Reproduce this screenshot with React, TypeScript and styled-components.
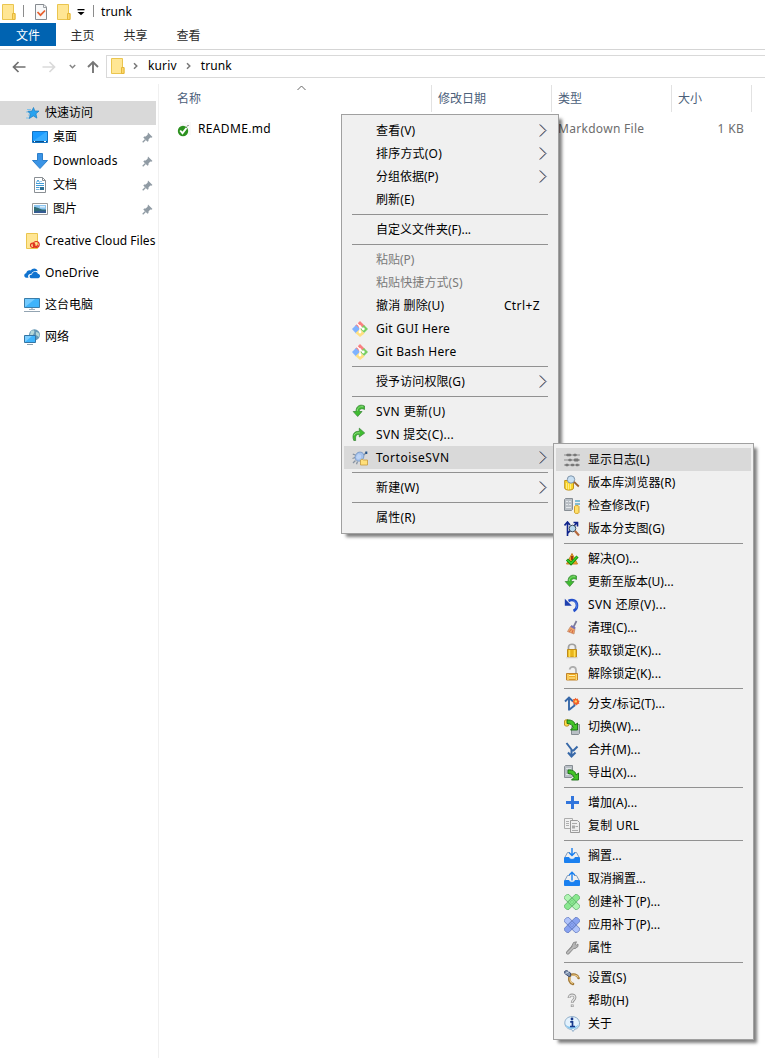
import React from "react";
import styled, { createGlobalStyle } from "styled-components";

const GlobalStyle = createGlobalStyle`
  * { box-sizing: border-box; }
  body {
    margin: 0;
    background: #fff;
    color: #000;
    font: 12px/16px "Noto Sans", "Noto Sans CJK SC", sans-serif;
    overflow: hidden;
  }
  svg { display: block; flex: none; }
`;

const Window = styled.div`
  position: relative;
  display: flex;
  flex-direction: column;
  width: 765px;
  height: 1058px;
  overflow: hidden;
  background: #fff;
`;

const Label = styled.span<{ $spacing?: number }>`
  white-space: pre;
  letter-spacing: ${(p) => p.$spacing ?? 0}px;
`;

/* ---------- title bar, ribbon, address ---------- */

const TitleBar = styled.header`
  display: flex;
  align-items: center;
  height: 23px;
  padding-left: 1px;
`;

const TitleRule = styled.i<{ $before: number; $after: number }>`
  width: 1px;
  height: 12px;
  margin: 0 ${(p) => p.$after}px 2px ${(p) => p.$before}px;
  background: #8c8c8c;
`;

const TitleGap = styled.i<{ $size: number }>`
  width: ${(p) => p.$size}px;
`;

const Ribbon = styled.nav`
  display: flex;
  height: 27px;
  border-bottom: 1px solid #d5d5d5;
`;

const Tab = styled.div<{ $active?: boolean }>`
  width: ${(p) => (p.$active ? 56 : 53)}px;
  height: 23px;
  line-height: 25px;
  text-align: center;
  color: ${(p) => (p.$active ? "#fff" : "#2b2b2b")};
  background: ${(p) => (p.$active ? "#0063b1" : "transparent")};
`;

const AddressRow = styled.div`
  display: flex;
  align-items: center;
  height: 34px;
  padding: 0 0 1px 0;
`;

const AddressBox = styled.div`
  display: flex;
  align-items: center;
  flex: 1;
  height: 23px;
  padding: 0 0 1px 3px;
  border: 1px solid #d9d9d9;
  border-right: 0;
`;

const Crumb = styled(Label)`
  margin: 0 0 1px 10px;
`;

/* ---------- panes ---------- */

const Body = styled.div`
  display: flex;
  flex: 1;
`;

const Sidebar = styled.aside`
  width: 159px;
  padding-top: 17px;
  border-right: 1px solid #f0f0f0;
`;

const SideGroup = styled.section`
  padding-bottom: 4px;
`;

const SideItem = styled.div<{ $indent?: boolean; $root?: boolean; $selected?: boolean }>`
  display: flex;
  align-items: center;
  width: 156px;
  height: ${(p) => (p.$root ? 32 : 24)}px;
  padding-left: ${(p) => (p.$indent ? 32 : 24)}px;
  padding-right: ${(p) => (p.$indent ? 3 : 0)}px;
  background: ${(p) => (p.$selected ? "#d9d9d9" : "transparent")};
  & > span { margin-left: 5px; flex: 1; }
`;

const Files = styled.main`
  display: flex;
  flex-direction: column;
  flex: 1;
`;

const HeadRow = styled.div`
  display: flex;
  height: 28px;
  padding-top: 1px;
`;

const HeadCell = styled.div<{ $width: number; $first?: boolean }>`
  position: relative;
  width: ${(p) => p.$width}px;
  padding-left: ${(p) => (p.$first ? 18 : 6)}px;
  border-right: 1px solid #e2e2e2;
  line-height: 27px;
  color: #4c607a;
`;

const SortMark = styled.span`
  position: absolute;
  left: 138px;
  top: 0;
`;

const FileRow = styled.div`
  display: flex;
  align-items: center;
  height: 23px;
  margin-top: 5px;
  padding-left: 17px;
`;

const FileCell = styled(Label)<{ $width: number; $muted?: boolean; $right?: boolean }>`
  width: ${(p) => p.$width}px;
  color: ${(p) => (p.$muted ? "#6d6d6d" : "#000")};
  text-align: ${(p) => (p.$right ? "right" : "left")};
`;

/* ---------- context menus ---------- */

const MenuBox = styled.div<{ $x: number; $y: number; $width: number }>`
  position: absolute;
  left: ${(p) => p.$x}px;
  top: ${(p) => p.$y}px;
  width: ${(p) => p.$width}px;
  padding: 4px 2px;
  border: 1px solid #a0a0a0;
  background: #f0f0f0;
  box-shadow: 4px 4px 3px -1px rgba(0, 0, 0, 0.5);
`;

const MenuRow = styled.div<{ $hot?: boolean; $disabled?: boolean }>`
  display: flex;
  align-items: center;
  height: 23px;
  padding: 0 8px;
  background: ${(p) => (p.$hot ? "#d9d9d9" : "transparent")};
  color: ${(p) => (p.$disabled ? "#7a7a7a" : "#000")};
`;

const IconSlot = styled.span`
  width: 24px;
  height: 16px;
  flex: none;
`;

const MenuText = styled(Label)`
  flex: 1;
`;

const Shortcut = styled(Label)`
  margin-right: 8px;
`;

const Divider = styled.div`
  height: 7px;
  padding: 3px 8px;
  &::before { content: ""; display: block; height: 1px; background: #919191; }
`;

/* ---------- icons ---------- */

const Svg = ({ w = 16, h = 16, children }: { w?: number; h?: number; children: React.ReactNode }) => (
  <svg width={w} height={h} viewBox={`0 0 ${w} ${h}`} fill="none">{children}</svg>
);

const Folder = () => (
  <Svg>
    <path d="M1.5 .5h11v9h1.5v6H1.5z" fill="#ffe694" stroke="#eac54f" />
    <path d="M11.5 9.5h2.5v6h-2.5z" fill="#fdd96b" stroke="#e5b73b" />
  </Svg>
);
const CheckedDoc = () => (
  <Svg>
    <path d="M2.500.5h8.500l2.500 2.500v12.500h-11z" fill="#f7f8f9" stroke="#868b90" />
    <path d="M10.500.5v3h3" stroke="#9ca0a5" />
    <path d="M4.500 8l3 3.200 4.500-4.700" stroke="#e8602e" strokeWidth="1.700" />
  </Svg>
);
const QuickMenu = () => (
  <Svg w={8} h={8}><path d="M.5 1h7v1.300h-7z" fill="#000" /><path d="M.5 4h7L4 7.300z" fill="#000" /></Svg>
);
const ArrowH = ({ flip, color }: { flip?: boolean; color: string }) => (
  <Svg w={14} h={12}>
    <g transform={flip ? "matrix(-1 0 0 1 14 0)" : undefined} stroke={color} strokeWidth="1.700">
      <path d="M1.500 6h12M6.500 1L1.500 6l5 5" />
    </g>
  </Svg>
);
const ArrowUp = () => <Svg w={12} h={14}><path d="M6 13V2M1 7l5-5 5 5" stroke="#777" strokeWidth="1.900" /></Svg>;
const ChevronDown = () => <Svg w={7} h={5}><path d="M.8 1l2.700 2.700L6.200 1" stroke="#858585" strokeWidth="1.500" /></Svg>;
const ChevronSmall = () => <Svg w={5} h={8}><path d="M1 1.200L3.800 4 1 6.800" stroke="#777" strokeWidth="1.500" /></Svg>;
const SortCaret = () => <Svg w={10} h={6}><path d="M.5 5l4-4 4 4" stroke="#666" /></Svg>;
const SubArrow = () => (
  <Svg w={9} h={13}>
    <path d="M0 .5l6 6-6 6" stroke="#f0bd8c" strokeWidth=".8" />
    <path d="M1.600.5l6 6-6 6" stroke="#7fc0ee" strokeWidth=".8" />
    <path d="M.8.5l6 6-6 6" stroke="#372a48" strokeWidth=".9" />
  </Svg>
);

const Star = () => (
  <Svg>
    <path d="M3 4.500h4M2 7h4M4 10h3M2 13h3" stroke="#7fc1ea" />
    <path d="M9.500 2.500l1.300 3.500 4.200.1-3.100 2.700 1 4.300-3.600-2.200-4 2.600 1.100-4.500-2.500-2.700 4-.2z" fill="#29a3ef" stroke="#2384c6" strokeWidth=".8" />
  </Svg>
);
const Desktop = () => (
  <Svg><path d="M.5 2.500h15v11H.5z" fill="#1a9bff" stroke="#1273c2" /><path d="M1 12L14 3h1v9z" fill="#38adff" /><path d="M1 12.500h14" stroke="#0b4f8c" /><path d="M2 12.500h1M12 12.500h2" stroke="#fff" /></Svg>
);
const Download = () => <Svg><path d="M5.500 .5h5v7h5L8 15.500.5 7.500h5z" fill="#3a94e6" stroke="#2d7fca" /></Svg>;
const Doc = () => (
  <Svg>
    <path d="M2.500.5h8l3 3v12h-11z" fill="#fff" stroke="#8a8f94" />
    <path d="M10.500.5v3h3" stroke="#8a8f94" />
    <path d="M4.500 5.500L6 3l1.500 2.500M8.500 4.500h1M4 6.500h8M4 8.500h8M4 10.500h3.500" stroke="#3f9bd6" />
    <path d="M4 12.500h3.500" stroke="#7bb9df" /><path d="M8 10h4v3H8z" fill="#2d6f94" />
  </Svg>
);
const Picture = () => (
  <Svg>
    <path d="M.5 2.500h15v11H.5z" fill="#fff" stroke="#9a9a9a" />
    <path d="M2 4h12v8H2z" fill="#8dc5ef" /><path d="M2 6c4 0 6 3 12 2.500V12H2z" fill="#316c74" />
    <path d="M2 10.500c5-1 8-1 12-.5v2H2z" fill="#365b92" /><path d="M8 5h5v1.500H8z" fill="#ddeefa" />
  </Svg>
);
const Pin = () => (
  <Svg w={11} h={11}>
    <path d="M6 .5L10.500 5l-1.200.7-1-.1-1.800 1.900v1.500l-1 .8-4.200-4.200.9-1h1.500l1.900-1.800z" fill="#909ba4" />
    <path d="M3.500 7.500L.7 10.300" stroke="#909ba4" strokeWidth="1.300" />
  </Svg>
);
const CreativeCloud = () => (
  <Svg>
    <path d="M2.500.5h11v15h-11z" fill="#ffe694" stroke="#eac54f" />
    <g stroke="#e0341f" strokeWidth="1.200"><circle cx="8.700" cy="12.300" r="2.200" /><circle cx="12.200" cy="11.500" r="3" /><path d="M9 11.500l2 1.800c1 .8 2.500 0 2.400-1.600" /></g>
  </Svg>
);
const OneDrive = () => (
  <Svg>
    <path d="M4.500 12.800H2.300C-.4 12.200-.4 8.700 2.200 8.300 2.500 5.600 5 4.700 6.700 5.500c1.700-3 6.200-2.800 7 .7-4-.8-6 1.200-6.200 2.500-3.200 0-4 2.200-3 4.100z" fill="#0f72cf" />
    <path d="M7 13.200c-2.300-.7-1.700-3.800 1-3.700.4-3.400 4.800-3.700 5.900-.8 2.800.5 2.800 4.200.3 4.500z" fill="#0f72cf" />
  </Svg>
);
const Computer = () => (
  <Svg>
    <path d="M.5 1.500h15v9H.5z" fill="#3fb4fb" stroke="#3b7da9" /><path d="M1 10V2h10z" fill="#74cbff" />
    <path d="M5 12.500h6" stroke="#9fb0bc" /><path d="M0 14.500h16" stroke="#93a4b2" /><path d="M7 11h2v1H7z" fill="#bcc7cf" />
  </Svg>
);
const Network = () => (
  <Svg>
    <circle cx="10.500" cy="5.800" r="5.500" fill="#6799b5" /><path d="M7 2c3-2 4 0 3 2s-1 3-4 2zM12 3c3 0 4 3 3 5l-3-2z" fill="#b5d8d8" />
    <path d="M.5 6.500h11v7H.5z" fill="#3fb4fb" stroke="#3475a4" /><path d="M1 13V7h7z" fill="#7dceff" />
    <path d="M3 15.500h6" stroke="#8ba0ae" />
  </Svg>
);
const FileOk = () => (
  <Svg>
    <path d="M4 1h11v13H4z" fill="#f9f9f9" /><circle cx="7" cy="10" r="5.200" fill="#2c911f" />
    <path d="M4.200 9.500l2.300 2.700 4-5.200" stroke="#fff" strokeWidth="1.900" /><path d="M11 5.500l1.500-1.500" stroke="#555" />
  </Svg>
);
const GitLogo = () => (
  <Svg>
    <path d="M8 0l5 5-5 4-5-4z" fill="#f98080" /><path d="M4 4l4 4-4 4.500L0 8z" fill="#80b3ff" />
    <path d="M12 4l4 4-4 4-4-4z" fill="#79cf62" /><path d="M8 8l4.500 4.500L8 16l-4.500-4z" fill="#ffe080" />
    <path d="M5 2.500l3 3v6M8 5.500L11 8" stroke="#fff" strokeWidth="1.300" />
    <circle cx="8" cy="5.500" r="1.300" fill="#fff" /><circle cx="8" cy="11" r="1.400" fill="#fff" /><circle cx="11.300" cy="8" r="1.400" fill="#fff" />
  </Svg>
);
const UpdateArrow = () => (
  <Svg>
    <path d="M12.500 5.500V2C8-.2 4 2 4 7.500H1.200l4.500 5 4.300-5H7.300C7.200 5 9.500 3.800 12.500 5.500z" fill="#3fbd30" stroke="#3d8a3b" strokeWidth=".8" />
    <path d="M5.300 7c0-3 2-4.800 6-4.200" stroke="#8dd780" />
  </Svg>
);
const CommitArrow = () => (
  <Svg>
    <path d="M1.800 13.500C-.4 8 2 3.800 7.300 4.400V1.200l5.400 4.800-5.400 4V7.500C4 7 3.200 9.500 3.700 13.500z" fill="#3fbd30" stroke="#3d8a3b" strokeWidth=".8" />
    <path d="M2 8.500c.8-2.500 3-3 6-2.600" stroke="#8dd780" />
  </Svg>
);
const Tortoise = () => (
  <Svg>
    <path d="M3.500 10.500L1 13M5.500 11.500l-1 2.800M3.500 5L.8 4.200M3 7.500L.5 8.500M12 5l2-2.500" stroke="#8793a2" strokeWidth="1.300" />
    <path d="M3 8c0-4 3-7 7-5.500 2 1 2.500 4 1 6.500-2 3-7 3-8-1z" fill="#a6c3ed" stroke="#6f90be" strokeWidth=".8" />
    <path d="M6 4l3 1v3L6 9.500 4 7.500z" fill="#bdd4f5" /><path d="M13.300 1.500h2v2.500h-2z" fill="#25548a" />
    <path d="M8.500 10l1.500-1 1.500 1h4v5h-7z" fill="#ffdf7a" stroke="#c69a3b" strokeWidth=".8" />
  </Svg>
);
const LogLines = () => (
  <Svg>
    <path d="M0 3h16M0 8h16M0 13h16" stroke="#8d8d8d" />
    <g fill="#777"><path d="M2 3l1-1.300h3.500L7.500 3l-1 1.300H3zM9 3l1-1.300h2L13 3l-1 1.300h-2zM4 8l1-1.300h2L8 8 7 9.300H5zM9.500 8l1-1.500h3.500L15 8l-1 1.500h-3.500zM1 13l1-1.300h2L5 13l-1 1.300H2zM6.500 13l1-1.300h2l1 1.300-1 1.300h-2zM11.500 13l.8-1.300h2L15 13l-.7 1.300h-2z" /></g>
  </Svg>
);
const RepoBrowse = () => (
  <Svg>
    <path d="M.7 5.500v7.500c0 2.800 8.800 2.800 8.800 0V5.500z" fill="#fbd52b" stroke="#c0941b" /><path d="M2.500 8v6M4.500 8.500v6M6.500 9v5" stroke="#ffed82" />
    <circle cx="7" cy="4.500" r="3.700" fill="#c8dff2" stroke="#7e93a8" /><path d="M10 6.800l4.800 4.700" stroke="#99602f" strokeWidth="1.800" />
  </Svg>
);
const CheckMods = () => (
  <Svg>
    <path d="M.5 1.500l1-1h7v11l-1 1h-7z" fill="#b9bfc5" stroke="#868d93" /><path d="M2 3.500h2M5 3.500h2M2 6.500h2M5 6.500h2M2 9.500h5" stroke="#e3e7ea" />
    <path d="M11 3h5M11 6h5" stroke="#1689b5" strokeWidth="1.200" />
    <path d="M10.500 8.500c0-1.300 4.500-1.300 4.500 0v6c0 1.300-4.500 1.300-4.500 0z" fill="#ffe06a" stroke="#d0a22c" />
  </Svg>
);
const RevGraph = () => (
  <Svg>
    <path d="M3.500 15V1.500M0.500 4.500l3-3.500L6 4M4 12l9-10.500M9.500 1.500h4v4" stroke="#0f248c" strokeWidth="1.600" />
    <circle cx="8.500" cy="7.500" r="3.300" fill="#b8d9ef" stroke="#3d4f5d" /><path d="M11 10l4 4.500" stroke="#b4683c" strokeWidth="2.200" />
  </Svg>
);
const Resolve = () => (
  <Svg>
    <path d="M8 2.500l5.500 10.500h-11z" fill="#f2a31e" stroke="#c7802a" /><path d="M8 5v4" stroke="#8a1d08" strokeWidth="1.600" />
    <path d="M3 8.500l4 4 6.500-7" stroke="#13870e" strokeWidth="3" /><path d="M3.300 9l3.800 3.300 6-6.500" stroke="#35d52b" strokeWidth="1.300" />
  </Svg>
);
const Revert = () => (
  <Svg>
    <path d="M4.500 4C9 1.500 13 4 13 8.500c0 2.500-1.500 4.500-3.500 5.500" stroke="#234fca" strokeWidth="2.600" />
    <path d="M.8 1.800v7h7z" fill="#1f3fae" />
    <path d="M9.500 3.800c3 1 4 4 2.800 7.500" stroke="#5c87e6" strokeWidth=".9" />
  </Svg>
);
const Broom = () => (
  <Svg>
    <path d="M12.500 1L9.500 7" stroke="#7b7b98" strokeWidth="1.700" /><path d="M6.500 6.500l4.500 2-1 5.500-6.500-2.500z" fill="#eca568" stroke="#c08360" strokeWidth=".7" />
    <path d="M7 5.800l4.200 2.500" stroke="#7471b5" strokeWidth="2" /><path d="M5 12l2.500-3M8 13l1-3" stroke="#d66a4c" />
  </Svg>
);
const Lock = () => (
  <Svg>
    <path d="M4.500 8V4C4.500.3 11.500.3 11.500 4v4" stroke="#a0a0a0" strokeWidth="1.700" /><path d="M3.500 6.500h9v7.500h-9z" fill="#e9b51b" stroke="#bd8b1c" />
    <path d="M5.500 7v7M10.500 7v7" stroke="#ffdf56" strokeWidth="1.500" /><path d="M2 14.800h12" stroke="#d0d0d0" strokeWidth=".8" />
  </Svg>
);
const Unlock = () => (
  <Svg>
    <path d="M5.500 3.500C6.500-.2 12-.2 12 4v4" stroke="#adadad" strokeWidth="1.700" /><path d="M2.500 7.500h11v6.500h-11z" fill="#efaa22" stroke="#c1832a" />
    <path d="M4 8v6M12.300 8v6" stroke="#ffe07b" strokeWidth="1.200" /><path d="M5 9.500h6M5 12h6" stroke="#fff1b1" />
  </Svg>
);
const Branch = () => (
  <Svg>
    <path d="M5 14.500V2M1 5.500L5 1.500l4 4M5.500 13.500L10.500 9.500V6" stroke="#3768a8" strokeWidth="1.900" />
    <path d="M11.500 1.800l1 1.300 1.500-.5.200 1.700 1.600.7-1 1.300.6 1.500-1.700.1-.8 1.500-1.300-1.200-1.700.6-.1-1.800-1.500-1.200 1.200-1.100L9 3.100l1.700-.1z" fill="#f25f28" /><circle cx="11.800" cy="5.400" r="1.200" fill="#ffd35e" />
  </Svg>
);
const Curve = ({ x = 0, y = 0 }: { x?: number; y?: number }) => (
  <path transform={`translate(${x} ${y})`} d="M0 0C5-.5 8 2 8 5L10.500 3v7H3.500L6 7.500C5.500 5 3.500 3.500 0 3.500z" fill="#42c427" stroke="#166d12" strokeWidth=".9" />
);
const Switch = () => (
  <Svg>
    <path d="M8.500 5.500h7v9l-1 1h-7v-6z" fill="#b9bfc5" stroke="#868d93" /><path d="M.5 2C.5.200 5 .200 5 2v4C5 7.500.5 7.500.5 6z" fill="#ffdb48" stroke="#b8922c" />
    <Curve x={3} y={1} />
  </Svg>
);
const Merge = () => (
  <Svg><path d="M2.500 1l5 6.500v7M13.500 4.500L9.500 8.500H7.500M4 10.500l3.500 4 4-4" stroke="#3768a8" strokeWidth="2" /></Svg>
);
const Export = () => (
  <Svg><path d="M.5 1.500l1-1h7v11l-1 1h-7z" fill="#b9bfc5" stroke="#868d93" /><path d="M2 3.500h5M2 9.500h3" stroke="#dfe3e6" /><Curve x={4} y={5} /></Svg>
);
const Add = () => <Svg><path d="M8.500 1v13M2 7.500h13" stroke="#3175dc" strokeWidth="3" /></Svg>;
const CopyUrl = () => (
  <Svg>
    <path d="M.5 .5h8v10h-8z" fill="#f1f1f1" stroke="#acacac" /><path d="M2 3.500h3M2 5.500h3M2 7.500h3" stroke="#b0b0b0" />
    <path d="M6.500 2.500h7l2 2v10h-9z" fill="#eee" stroke="#999" /><path d="M8 5.500h5M11.500 8.500h2.500M8 12.500h6" stroke="#aaa" /><path d="M8 7.500h3v3H8z" fill="#a9a9a9" />
  </Svg>
);
const Tray = ({ up }: { up?: boolean }) => (
  <Svg>
    <path d="M.5 9.500h4.500c.5 2.500 5.500 2.500 6 0h4.500v5H.5z" fill="#1a80f0" stroke="#1a80f0" strokeLinejoin="round" /><path d="M.8 9.500L3.500 4.500h2.500M10 4.500h2.500l2.700 5" stroke="#7f9bbd" />
    <path d={up ? "M8 9.500V1.500M5.200 4L8 1.200 10.800 4" : "M8 0v7.500M5.200 4.800L8 7.600l2.800-2.800"} stroke="#1a80f0" strokeWidth="1.400" />
  </Svg>
);
const Patch = ({ dark, mid, light }: { dark: string; mid: string; light: string }) => (
  <Svg>
    <g transform="rotate(45 8 8)" stroke={dark} strokeWidth=".8">
      <rect x="-1" y="5" width="18" height="6" rx="1.500" fill={light} />
      <rect x="5" y="-1" width="6" height="18" rx="1.500" fill={mid} />
      <rect x="5" y="5" width="6" height="6" fill={mid} />
      <path d="M6.500 7h1M8.500 7h1M6.500 9h1M8.500 9h1" />
    </g>
  </Svg>
);
const Wrench = () => (
  <Svg>
    <path d="M3.800 12.700L9.500 6.500" stroke="#808080" strokeWidth="3.600" strokeLinecap="round" /><path d="M8 5.500L9.500 2.500l3-.7-1.200 2.500L12.500 5l1.500-1v2.500l-3 2.200-2.500-1z" fill="#b4b4b4" stroke="#808080" strokeWidth=".8" />
    <path d="M3.800 12.700L9.500 7" stroke="#bcbcbc" strokeWidth="2" strokeLinecap="round" />
  </Svg>
);
const Settings = () => (
  <Svg>
    <path d="M5.500 5.500C9.500 3.500 13.500 4.500 14.500 8M6 5.500c-1.500 4-.5 7.500 3 8.500" stroke="#a27834" strokeWidth="2.600" strokeLinecap="round" />
    <path d="M6.500 5.500c3.500-1 6.500-.5 7.800 2M6.300 6.500c-1 3.500 0 5.800 2.500 7" stroke="#f0d090" strokeWidth="1.100" />
    <path d="M.5 1.500l2-1.200L6.500 3l.3 3-2 .5-4-3z" fill="#8194b0" stroke="#31426b" strokeWidth=".9" /><path d="M1.500 3.500L5 1.500" stroke="#d6e1ef" />
  </Svg>
);
const Help = () => (
  <Svg>
    <path d="M5 5c0-4.200 6.200-3.800 6-.3C10.800 7 8.200 7 8.200 9.700M8.200 11.500v2.500" stroke="#929292" strokeWidth="2.800" />
    <path d="M5 4.600c.5-3.200 5.700-3.200 5.900-.1C10.800 7 8.200 7 8.200 9.200M8.200 12V13.500" stroke="#e6e6e6" strokeWidth="1.200" />
  </Svg>
);
const About = () => (
  <Svg>
    <path d="M8 .6c9.500 0 9.500 11.900 2.800 12.600L9 15.500l-1.500-2.100C-1.500 12.800-1.500.6 8 .6z" fill="#e4f2fd" stroke="#8dabc7" />
    <path d="M1.500 8c1 4 12 4 13 0-1 6.500-12 6.500-13 0z" fill="#83c5ef" />
    <path d="M6.200 5.800h2.300v4.500M6 10.500h5" stroke="#17398c" strokeWidth="1.700" /><circle cx="8" cy="3" r="1.400" fill="#17398c" />
  </Svg>
);

/* ---------- data ---------- */

type Entry = {
  text: string;
  icon?: React.ReactNode;
  arrow?: boolean;
  hot?: boolean;
  disabled?: boolean;
  shortcut?: string;
  spacing?: number;
} | null;

const folderMenu: Entry[] = [
  { text: "查看(V)", arrow: true, spacing: 0.2 },
  { text: "排序方式(O)", arrow: true, spacing: 0.2 },
  { text: "分组依据(P)", arrow: true },
  { text: "刷新(E)", spacing: 0.1 },
  null,
  { text: "自定义文件夹(F)..." },
  null,
  { text: "粘贴(P)", disabled: true },
  { text: "粘贴快捷方式(S)", disabled: true, spacing: 0.1 },
  { text: "撤消 删除(U)", shortcut: "Ctrl+Z", spacing: 0.15 },
  { text: "Git GUI Here", icon: <GitLogo />, spacing: 0.25 },
  { text: "Git Bash Here", icon: <GitLogo />, spacing: 0.25 },
  null,
  { text: "授予访问权限(G)", arrow: true, spacing: 0.1 },
  null,
  { text: "SVN 更新(U)", icon: <UpdateArrow />, spacing: 0.4 },
  { text: "SVN 提交(C)...", icon: <CommitArrow />, spacing: 0.3 },
  { text: "TortoiseSVN", icon: <Tortoise />, arrow: true, hot: true, spacing: 0.5 },
  null,
  { text: "新建(W)", arrow: true, spacing: 0.2 },
  null,
  { text: "属性(R)", spacing: 0.2 },
];

const svnMenu: Entry[] = [
  { text: "显示日志(L)", icon: <LogLines />, hot: true },
  { text: "版本库浏览器(R)", icon: <RepoBrowse />, spacing: 0.1 },
  { text: "检查修改(F)", icon: <CheckMods /> },
  { text: "版本分支图(G)", icon: <RevGraph />, spacing: 0.1 },
  null,
  { text: "解决(O)...", icon: <Resolve />, spacing: 0.1 },
  { text: "更新至版本(U)...", icon: <UpdateArrow /> },
  { text: "SVN 还原(V)...", icon: <Revert />, spacing: 0.35 },
  { text: "清理(C)...", icon: <Broom />, spacing: 0.1 },
  { text: "获取锁定(K)...", icon: <Lock />, spacing: 0.1 },
  { text: "解除锁定(K)...", icon: <Unlock />, spacing: 0.1 },
  null,
  { text: "分支/标记(T)...", icon: <Branch />, spacing: 0.1 },
  { text: "切换(W)...", icon: <Switch />, spacing: 0.1 },
  { text: "合并(M)...", icon: <Merge />, spacing: 0.1 },
  { text: "导出(X)...", icon: <Export />, spacing: 0.1 },
  null,
  { text: "增加(A)...", icon: <Add />, spacing: 0.1 },
  { text: "复制 URL", icon: <CopyUrl />, spacing: 0.3 },
  null,
  { text: "搁置...", icon: <Tray /> },
  { text: "取消搁置...", icon: <Tray up /> },
  { text: "创建补丁(P)...", icon: <Patch dark="#5fae69" mid="#8ae890" light="#b0f5b3" /> },
  { text: "应用补丁(P)...", icon: <Patch dark="#6279bd" mid="#88a2f0" light="#b0c3fa" /> },
  { text: "属性", icon: <Wrench /> },
  null,
  { text: "设置(S)", icon: <Settings />, spacing: 0.15 },
  { text: "帮助(H)", icon: <Help />, spacing: 0.1 },
  { text: "关于", icon: <About /> },
];

const Menu = ({ entries, x, y, width }: { entries: Entry[]; x: number; y: number; width: number }) => (
  <MenuBox $x={x} $y={y} $width={width}>
    {entries.map((e, i) =>
      e ? (
        <MenuRow key={i} $hot={e.hot} $disabled={e.disabled}>
          <IconSlot>{e.icon}</IconSlot>
          <MenuText $spacing={e.spacing}>{e.text}</MenuText>
          {e.shortcut && <Shortcut $spacing={0.4}>{e.shortcut}</Shortcut>}
          {e.arrow && <SubArrow />}
        </MenuRow>
      ) : (
        <Divider key={i} />
      ),
    )}
  </MenuBox>
);

export default function App() {
  return (
    <Window>
      <GlobalStyle />
      <TitleBar>
        <Folder />
        <TitleRule $before={6} $after={9} />
        <CheckedDoc />
        <TitleGap $size={7} />
        <Folder />
        <TitleGap $size={5} />
        <QuickMenu />
        <TitleRule $before={8} $after={7} />
        <Label $spacing={0.1}>trunk</Label>
      </TitleBar>
      <Ribbon>
        <Tab $active>文件</Tab>
        <Tab>主页</Tab>
        <Tab>共享</Tab>
        <Tab>查看</Tab>
      </Ribbon>
      <AddressRow>
        <TitleGap $size={12} />
        <ArrowH color="#707070" />
        <TitleGap $size={16} />
        <ArrowH flip color="#dadada" />
        <TitleGap $size={13} />
        <ChevronDown />
        <TitleGap $size={11} />
        <ArrowUp />
        <TitleGap $size={7} />
        <AddressBox>
          <Folder />
          <TitleGap $size={7} />
          <ChevronSmall />
          <Crumb $spacing={0.15}>kuriv</Crumb>
          <TitleGap $size={9} />
          <ChevronSmall />
          <Crumb $spacing={0.1}>trunk</Crumb>
        </AddressBox>
      </AddressRow>
      <Body>
        <Sidebar>
          <SideGroup>
            <SideItem $selected><Star /><Label>快速访问</Label></SideItem>
            <SideItem $indent><Desktop /><Label>桌面</Label><Pin /></SideItem>
            <SideItem $indent><Download /><Label $spacing={0.2}>Downloads</Label><Pin /></SideItem>
            <SideItem $indent><Doc /><Label>文档</Label><Pin /></SideItem>
            <SideItem $indent><Picture /><Label>图片</Label><Pin /></SideItem>
          </SideGroup>
          <SideItem $root><CreativeCloud /><Label $spacing={0.02}>Creative Cloud Files</Label></SideItem>
          <SideItem $root><OneDrive /><Label $spacing={0.1}>OneDrive</Label></SideItem>
          <SideItem $root><Computer /><Label>这台电脑</Label></SideItem>
          <SideItem $root><Network /><Label>网络</Label></SideItem>
        </Sidebar>
        <Files>
          <HeadRow>
            <HeadCell $first $width={273}>名称<SortMark><SortCaret /></SortMark></HeadCell>
            <HeadCell $width={120}>修改日期</HeadCell>
            <HeadCell $width={120}>类型</HeadCell>
            <HeadCell $width={80}>大小</HeadCell>
          </HeadRow>
          <FileRow>
            <FileOk />
            <TitleGap $size={6} />
            <FileCell $width={360} $spacing={0.35}>README.md</FileCell>
            <FileCell $width={100} $muted $spacing={0.3}>Markdown File</FileCell>
            <FileCell $width={86} $muted $right $spacing={0.3}>1 KB</FileCell>
          </FileRow>
        </Files>
      </Body>
      <Menu entries={folderMenu} x={341} y={114} width={218} />
      <Menu entries={svnMenu} x={553} y={443} width={201} />
    </Window>
  );
}
